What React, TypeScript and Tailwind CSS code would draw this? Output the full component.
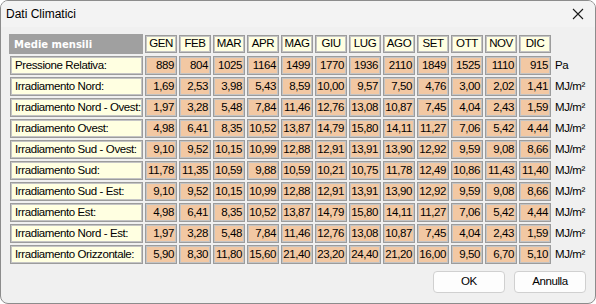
import React from "react";

const months = ["GEN","FEB","MAR","APR","MAG","GIU","LUG","AGO","SET","OTT","NOV","DIC"];

const rows: { label: string; values: string[]; unit: string }[] = [
  { label: "Pressione Relativa:", values: ["889","804","1025","1164","1499","1770","1936","2110","1849","1525","1110","915"], unit: "Pa" },
  { label: "Irradiamento Nord:", values: ["1,69","2,53","3,98","5,43","8,59","10,00","9,57","7,50","4,76","3,00","2,02","1,41"], unit: "MJ/m²" },
  { label: "Irradiamento Nord - Ovest:", values: ["1,97","3,28","5,48","7,84","11,46","12,76","13,08","10,87","7,45","4,04","2,43","1,59"], unit: "MJ/m²" },
  { label: "Irradiamento Ovest:", values: ["4,98","6,41","8,35","10,52","13,87","14,79","15,80","14,11","11,27","7,06","5,42","4,44"], unit: "MJ/m²" },
  { label: "Irradiamento Sud - Ovest:", values: ["9,10","9,52","10,15","10,99","12,88","12,91","13,91","13,90","12,92","9,59","9,08","8,66"], unit: "MJ/m²" },
  { label: "Irradiamento Sud:", values: ["11,78","11,35","10,59","9,88","10,59","10,21","10,75","11,78","12,49","10,86","11,43","11,40"], unit: "MJ/m²" },
  { label: "Irradiamento Sud - Est:", values: ["9,10","9,52","10,15","10,99","12,88","12,91","13,91","13,90","12,92","9,59","9,08","8,66"], unit: "MJ/m²" },
  { label: "Irradiamento Est:", values: ["4,98","6,41","8,35","10,52","13,87","14,79","15,80","14,11","11,27","7,06","5,42","4,44"], unit: "MJ/m²" },
  { label: "Irradiamento Nord - Est:", values: ["1,97","3,28","5,48","7,84","11,46","12,76","13,08","10,87","7,45","4,04","2,43","1,59"], unit: "MJ/m²" },
  { label: "Irradiamento Orizzontale:", values: ["5,90","8,30","11,80","15,60","21,40","23,20","24,40","21,20","16,00","9,50","6,70","5,10"], unit: "MJ/m²" },
];

const cellBorder = "border border-[#9c9c9c] shadow-[inset_1px_1px_0_#c4c4c4,inset_-1px_-1px_0_#c4c4c4]";
const narrow = "font-['Liberation_Sans',sans-serif] text-[11.5px] tracking-[-0.4px] leading-none text-black";

export default function App() {
  return (
    <div className="w-[596px] h-[304px] bg-[#f0f0f0] border border-[#8c8c8c] rounded-[8px] overflow-hidden flex flex-col">
      <div className="h-[26px] flex items-center justify-between pl-[5px] pr-[10px] bg-[#f3f3f3]">
        <span className="font-['Liberation_Sans',sans-serif] text-[12px] text-black">Dati Climatici</span>
        <svg width="12" height="12" viewBox="0 0 12 12" className="mr-[1px]">
          <path d="M1 1 L11 11 M11 1 L1 11" stroke="#1a1a1a" strokeWidth="1.1" />
        </svg>
      </div>
      <div className="flex-1 pl-[8px] pt-[7px] flex flex-col">
        <div className="grid grid-cols-[134px_repeat(12,32px)_auto] gap-x-[2px] gap-y-[2px] items-start">
          <div className="h-[20px] bg-[#a0a0a0] flex items-center pl-[5px] font-['DejaVu_Sans',sans-serif] font-bold text-[10px] text-white">
            Medie mensili
          </div>
          {months.map((m) => (
            <div key={m} className={`mt-[1px] h-[18px] bg-[#ffffe1] ${cellBorder} flex items-center justify-center ${narrow}`}>
              {m}
            </div>
          ))}
          <div />
          {rows.map((r) => (
            <React.Fragment key={r.label}>
              <div className={`ml-[1px] h-[19px] bg-[#ffffe1] ${cellBorder} flex items-center pl-[4px] ${narrow} whitespace-nowrap`}>
                {r.label}
              </div>
              {r.values.map((v, i) => (
                <div key={i} className={`h-[19px] bg-[#f2c8a3] ${cellBorder} flex items-center justify-end pr-[2px] ${narrow}`}>
                  {v}
                </div>
              ))}
              <div className={`h-[19px] flex items-center pl-[2px] ${narrow} whitespace-nowrap`}>{r.unit}</div>
            </React.Fragment>
          ))}
        </div>
        <div className="flex justify-end gap-[9px] pr-[9px] mt-[7px]">
          <button className={`w-[72px] h-[22px] bg-[#fdfdfd] border border-[#d0d0d0] rounded-[4px] ${narrow}`}>OK</button>
          <button className={`w-[72px] h-[22px] bg-[#fdfdfd] border border-[#d0d0d0] rounded-[4px] ${narrow}`}>Annulla</button>
        </div>
      </div>
    </div>
  );
}
